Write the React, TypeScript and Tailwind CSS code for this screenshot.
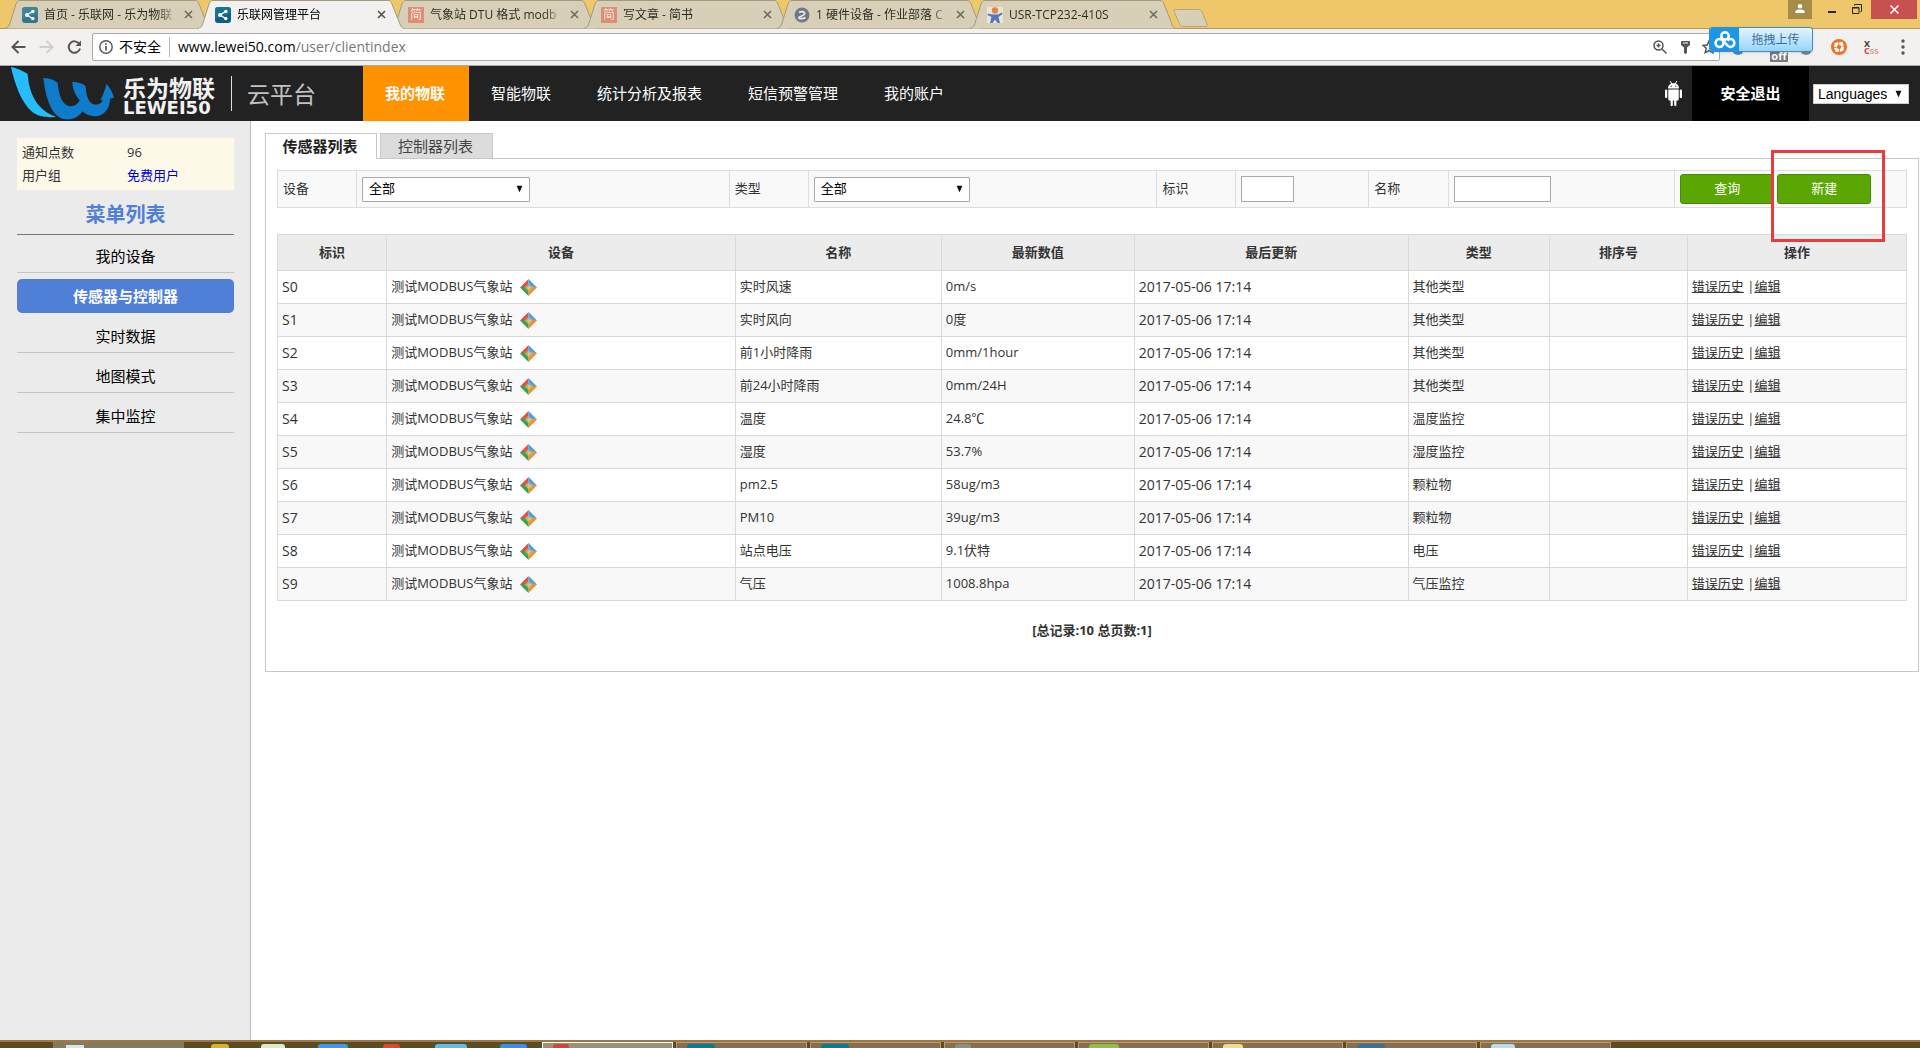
import React from 'react';

interface BrowserTab {
  title: string;
  icon: 'lewei' | 'jian' | 'zuoye' | 'usr';
  active?: boolean;
}

interface Sensor {
  id: string;
  name: string;
  value: string;
  type: string;
}

const browserTabs: BrowserTab[] = [
  { title: '首页 - 乐联网 - 乐为物联', icon: 'lewei' },
  { title: '乐联网管理平台', icon: 'lewei', active: true },
  { title: '气象站 DTU 格式 modb', icon: 'jian' },
  { title: '写文章 - 简书', icon: 'jian' },
  { title: '1 硬件设备 - 作业部落 C', icon: 'zuoye' },
  { title: 'USR-TCP232-410S', icon: 'usr' },
];

const navItems = ['我的物联', '智能物联', '统计分析及报表', '短信预警管理', '我的账户'];

const menuItems = ['我的设备', '传感器与控制器', '实时数据', '地图模式', '集中监控'];

const columns = [
  { label: '标识', width: '6.7%' },
  { label: '设备', width: '21.4%' },
  { label: '名称', width: '12.65%' },
  { label: '最新数值', width: '11.85%' },
  { label: '最后更新', width: '16.8%' },
  { label: '类型', width: '8.7%' },
  { label: '排序号', width: '8.45%' },
  { label: '操作', width: '13.45%' },
];

const sensors: Sensor[] = [
  { id: 'S0', name: '实时风速', value: '0m/s', type: '其他类型' },
  { id: 'S1', name: '实时风向', value: '0度', type: '其他类型' },
  { id: 'S2', name: '前1小时降雨', value: '0mm/1hour', type: '其他类型' },
  { id: 'S3', name: '前24小时降雨', value: '0mm/24H', type: '其他类型' },
  { id: 'S4', name: '温度', value: '24.8℃', type: '温度监控' },
  { id: 'S5', name: '湿度', value: '53.7%', type: '湿度监控' },
  { id: 'S6', name: 'pm2.5', value: '58ug/m3', type: '颗粒物' },
  { id: 'S7', name: 'PM10', value: '39ug/m3', type: '颗粒物' },
  { id: 'S8', name: '站点电压', value: '9.1伏特', type: '电压' },
  { id: 'S9', name: '气压', value: '1008.8hpa', type: '气压监控' },
];

const TabIcon: React.FC<{ icon: BrowserTab['icon'] }> = ({ icon }) => {
  if (icon === 'jian') {
    return (
      <span className="flex size-4 shrink-0 items-center justify-center bg-[#e07f66] text-xs text-[#f8e6dc]">简</span>
    );
  }
  if (icon === 'zuoye') {
    return (
      <svg viewBox="0 0 16 16" className="size-4 shrink-0">
        <circle cx="8" cy="8" r="7.5" fill="#56627f" />
        <path d="M5 5.500C7 4 11.500 4.500 10.500 7S5.500 9 5 10.500 9 12 11.500 10.500" fill="none" stroke="#f1efe8" strokeWidth="1.800" />
      </svg>
    );
  }
  if (icon === 'usr') {
    return (
      <svg viewBox="0 0 16 16" className="size-4 shrink-0">
        <rect width="16" height="16" fill="#f3ead8" />
        <circle cx="8" cy="3.500" r="3.200" fill="#e8742c" />
        <path d="M1 6.500 5 7.500h6l4-2 .5 1.500-4 3 1.500 6h-2.500L8 12.500 5.500 16H3l1.500-6L.5 8z" fill="#2f62c4" />
      </svg>
    );
  }
  return (
    <svg viewBox="0 0 16 16" className="size-4 shrink-0">
      <rect width="16" height="16" rx="3" fill="#0f5e86" />
      <path d="M3 0h10a3 3 0 0 1 3 3v3L0 12V3a3 3 0 0 1 3-3z" fill="#1c8296" opacity=".6" />
      <path d="M10.500 4.500 5 8l5.500 3.500" fill="none" stroke="#fff" strokeWidth="1.300" />
      <circle cx="5" cy="8" r="2" fill="#fff" />
      <circle cx="10.800" cy="4.500" r="1.700" fill="#fff" />
      <circle cx="10.800" cy="11.500" r="1.700" fill="#fff" />
    </svg>
  );
};

const TabStrip = () => (
  <div className="flex h-[29px] items-start justify-between border-b border-[#b09660] bg-[#eec76a]">
    <div className="flex pl-[5px]">
      {browserTabs.map((tab) => (
        <div
          key={tab.title}
          className={`relative -mr-[13px] flex h-[29px] w-[206px] items-center pr-[17px] pl-[17px] ${tab.active ? 'z-10' : ''}`}
        >
          <svg viewBox="0 0 206 29" preserveAspectRatio="none" className="absolute inset-0 h-full w-full">
            <path
              d="M0 28.500C3 28 4 26 5 23L11 4C12 1.500 13 .5 15 .5H190C192 .5 193 1.500 194 4L202 24C203 27 204 28 206 28.500"
              fill={tab.active ? '#f2f1f0' : '#d8cfb8'}
              stroke="#a4997c"
            />
            {tab.active && <path d="M1 28.500H205" stroke="#f2f1f0" />}
          </svg>
          <div className={`relative flex flex-1 items-center gap-[6px] ${tab.active ? '' : 'opacity-80'}`}>
            <TabIcon icon={tab.icon} />
            <a
              href="#tab"
              className="w-[134px] overflow-hidden text-xs whitespace-nowrap text-black [mask-image:linear-gradient(to_right,black_85%,transparent)]"
            >
              {tab.title}
            </a>
            <button aria-label="关闭标签页" className="shrink-0 text-[#55514a]">
              <svg viewBox="0 0 9 9" className="size-[9px]">
                <path d="M1 1 8 8M8 1 1 8" stroke="currentColor" strokeWidth="1.600" />
              </svg>
            </button>
          </div>
        </div>
      ))}
      <button aria-label="新标签页" className="mt-[7px] ml-[10px]">
        <svg viewBox="0 0 36 18" className="h-[18px] w-[36px]">
          <path d="M2 .5H26C27 .5 28 1 28.500 2L34 15C34.500 16.500 34 17.500 33 17.500H10C8 17.500 7.500 17 7 16L1 2C.8 1 1 .5 2 .5z" fill="#d8cfb8" stroke="#b3a57c" />
        </svg>
      </button>
    </div>
    <div className="flex items-start pr-[3px]">
      <button aria-label="用户" className="flex h-[19px] w-6 justify-center bg-[#a68c48] pt-1">
        <svg viewBox="0 0 10 9" className="h-[9px] w-[10px]" fill="#fff">
          <circle cx="5" cy="2.200" r="2.200" />
          <path d="M.5 9V7.200C.5 5 9.500 5 9.500 7.200V9z" />
        </svg>
      </button>
      <button aria-label="最小化" className="ml-4 pt-[11px]">
        <span className="block h-[2px] w-2 bg-[#2b2417]" />
      </button>
      <button aria-label="还原" className="ml-4 pt-1">
        <svg viewBox="0 0 10 10" className="size-[10px]" fill="none" stroke="#2b2417">
          <path d="M.5 3.500h6.500v6H.500zM.5 4h6.500M2.500 1.500V.5h7v7H8.500" />
        </svg>
      </button>
      <button aria-label="关闭" className="ml-[9px] flex h-[19px] w-[46px] items-center justify-center bg-[#c75050]">
        <svg viewBox="0 0 9 9" className="size-[9px]">
          <path d="M.5.5 8.500 8.500M8.500.5.5 8.500" stroke="#fff" strokeWidth="1.500" />
        </svg>
      </button>
    </div>
  </div>
);

const UploadWidget = () => (
  <button className="absolute top-[-2px] right-[107px] flex h-[25px] w-[104px] items-center overflow-hidden rounded-[3px] border border-[#3c8fc0] bg-gradient-to-b from-[#e3f5fe] to-[#97d5fa] shadow">
    <span className="flex h-full w-[29px] items-center justify-center bg-[#1c97e8]">
      <svg viewBox="0 0 22 18" className="h-[18px] w-[22px]" fill="none" stroke="#fff" strokeWidth="2.500">
        <circle cx="11" cy="5" r="3.700" />
        <circle cx="5.500" cy="12" r="3.900" />
        <path d="M9 9.500 13.500 14.500A3.900 3.900 0 1 0 13.500 9.500" />
      </svg>
    </span>
    <span className="flex-1 text-xs text-[#3d6f9c]">拖拽上传</span>
  </button>
);

const Toolbar = () => (
  <div className="relative flex h-[37px] items-center border-b border-[#a9a9a9] bg-[#f2f1f0] pr-[15px] pl-[11px]">
    <div className="flex items-center gap-[13px] text-[#555]">
      <button aria-label="后退">
        <svg viewBox="0 0 15 14" className="h-[14px] w-[15px]" fill="none" stroke="currentColor" strokeWidth="2">
          <path d="M14.500 7H2M7.500 1 1.500 7l6 6" />
        </svg>
      </button>
      <button aria-label="前进" className="text-[#cfcfcf]">
        <svg viewBox="0 0 15 14" className="h-[14px] w-[15px]" fill="none" stroke="currentColor" strokeWidth="2">
          <path d="M.5 7H13M7.500 1l6 6-6 6" />
        </svg>
      </button>
      <button aria-label="重新加载">
        <svg viewBox="0 0 15 14" className="h-[14px] w-[15px]" fill="none" stroke="currentColor" strokeWidth="2">
          <path d="M12.300 4A5.700 5.700 0 1 0 13 8.500" />
          <path d="M14 .5V6H8.500z" fill="currentColor" stroke="none" />
        </svg>
      </button>
    </div>
    <div className="ml-[10px] flex h-[28px] flex-1 items-center rounded-[2px] border border-[#a9a9a9] bg-white pr-[3px] pl-[6px] text-sm">
      <svg viewBox="0 0 14 14" className="size-[14px] shrink-0" fill="none" stroke="#555" strokeWidth="1.400">
        <circle cx="7" cy="7" r="6.200" />
        <path d="M7 6v4.500M7 3.200v1.600" strokeWidth="1.700" />
      </svg>
      <span className="ml-[6px] border-r border-[#b5b5b5] pr-2 leading-5">不安全</span>
      <div className="ml-2 flex-1 text-[#777]">
        <a href="#site" className="text-black">www.lewei50.com</a>/user/clientindex
      </div>
      <svg viewBox="0 0 14 14" className="size-[14px]" fill="none" stroke="#555" strokeWidth="1.500">
        <circle cx="5.500" cy="5.500" r="4.500" />
        <path d="M9 9l4.500 4.500M3.500 5.500h4M5.500 3.500v4" />
      </svg>
      <svg viewBox="0 0 9 13" className="mr-3 ml-[14px] h-[13px] w-[9px]" fill="#555">
        <path d="M0 1a1 1 0 0 1 1-1h7a1 1 0 0 1 1 1v3L6 6.500V12L4.500 13 3 12V6.500L0 4zM2 1.500v1h5v-1z" />
      </svg>
      <svg viewBox="0 0 14 14" className="size-[14px]" fill="none" stroke="#555" strokeWidth="1.500">
        <path d="M7 1l1.800 4 4.200.4-3.200 2.900 1 4.400L7 10.500 3.200 12.700l1-4.400L1 5.400 5.200 5z" />
      </svg>
    </div>
    <div className="ml-3 flex items-center">
      <span className="mt-1 size-3 rounded-full bg-[#3f8fc8]" />
      <span className="mt-[15px] ml-[26px] flex h-[14px] w-[18px] items-end justify-center overflow-hidden bg-[#7a7a7a] text-[11px] leading-3 font-bold text-white">
        off
      </span>
      <span className="mt-1 ml-3 size-3 rounded-full bg-[#7c8790]" />
      <svg viewBox="0 0 16 16" className="ml-[19px] size-4">
        <circle cx="8" cy="8" r="8" fill="#f0702a" />
        <circle cx="8" cy="8" r="3.600" fill="none" stroke="#fff" strokeWidth="2.800" strokeDasharray="4.600 1" />
        <path d="M3.500 4.500 6 6.500M11.500 3 9.500 6M12.500 11.500 10 9.500M5 13 6.500 10" stroke="#fff" strokeWidth="1.400" />
      </svg>
      <span className="ml-[17px] flex h-[14px] w-[13px] flex-col text-[9px] leading-[7px] font-bold">
        <span className="text-[#333]">X</span>
        <span className="text-[#d8464c]">C<span className="text-[#e89a9a]">ss</span></span>
      </span>
      <button aria-label="菜单" className="ml-[24px]">
        <svg viewBox="0 0 4 16" className="h-4 w-1" fill="#555">
          <circle cx="2" cy="2" r="1.700" />
          <circle cx="2" cy="8" r="1.700" />
          <circle cx="2" cy="14" r="1.700" />
        </svg>
      </button>
    </div>
    <UploadWidget />
  </div>
);

const Logo = () => (
  <a href="#home" className="flex h-full w-[363px] shrink-0 items-center pl-[11px]">
    <svg viewBox="33 12 309 162" className="h-[54px] w-[103px]">
      <path d="M33 12C42 12 78 28 83 33C86 80 104 140 168 161C150 165 118 163 98 148C62 118 44 60 33 12z" fill="#25bdfb" />
      <path d="M130 45C150 46 165 52 173 60C176 95 186 124 206 129C222 132 234 124 239 112C227 98 218 80 217 57C235 57 250 62 257 70C258 95 264 118 280 124C296 127 306 120 308 111L301 112C311 92 317 76 319 62C330 74 338 88 342 104L330 107C330 137 312 158 286 160C268 160 256 153 248 145C236 162 218 171 198 169C156 166 138 110 130 45z" fill="#0f7ccb" />
    </svg>
    <span className="ml-[9px] flex w-[98px] flex-col pt-[3px] text-[#f2f2f2]">
      <span className="text-[23px] leading-[24px] font-bold">乐为物联</span>
      <span className="font-['DejaVu_Sans'] text-lg leading-[15px] font-bold">LEWEI50</span>
    </span>
    <span className="ml-[10px] h-[35px] w-px bg-[#ddd]" />
    <span className="ml-[15px] text-[23px] leading-[24px] text-[#c2c2c2]">云平台</span>
  </a>
);

const SiteHeader = () => (
  <header className="flex h-[55px] items-center bg-[#222] text-[15px] text-white">
    <Logo />
    <nav className="flex h-full flex-1">
      {navItems.map((item, i) => (
        <a
          key={item}
          href="#nav"
          className={`flex h-full items-center pr-6 pl-[22px] ${i === 0 ? 'bg-[#ff9200] font-bold' : ''}`}
        >
          {item}
        </a>
      ))}
    </nav>
    <svg viewBox="0 0 52 78" className="mr-[10px] h-[26px] w-[17px]" fill="#fff">
      <path d="M9 22C9 14 14 9 19 7L14 0l2-1 6 7h8l6-7 2 1-5 7c5 2 10 7 10 15z" />
      <path d="M10 25h32v30a4 4 0 0 1-4 4h-3v14a3 3 0 0 1-7 0V59h-4v14a3 3 0 0 1-7 0V59h-3a4 4 0 0 1-4-4z" />
      <rect x="0" y="25" width="7" height="27" rx="3.500" />
      <rect x="45" y="25" width="7" height="27" rx="3.500" />
      <circle cx="19" cy="15" r="2" fill="#222" />
      <circle cx="33" cy="15" r="2" fill="#222" />
    </svg>
    <button className="h-full w-[117px] bg-black font-bold">安全退出</button>
    <div className="relative mr-[11px] ml-1">
      <select
        aria-label="Languages"
        className="block h-5 w-[96px] appearance-none border border-[#ccc] bg-white pl-1 font-['Liberation_Sans'] text-sm leading-4 text-black"
      >
        <option>Languages</option>
      </select>
      <Arrow />
    </div>
  </header>
);

const Arrow = () => (
  <svg viewBox="0 0 7 7" className="pointer-events-none absolute top-1/2 right-[7px] size-[7px] -translate-y-1/2">
    <path d="M.5 0h6L3.500 7z" fill="#111" />
  </svg>
);

const Sidebar = () => (
  <aside className="w-[251px] shrink-0 border-r border-[#bbb] bg-[#ebebeb] pt-[17px] pr-4 pl-[17px]">
    <dl className="grid grid-cols-[105px_1fr] bg-[#fdf9e8] px-[5px] py-[3px] text-[13px] leading-[23px] text-[#333]">
      <dt>通知点数</dt>
      <dd>96</dd>
      <dt>用户组</dt>
      <dd>
        <a href="#group" className="text-[#00d]">免费用户</a>
      </dd>
    </dl>
    <h2 className="border-b border-[#777] pt-[10px] pb-1 text-center text-xl leading-[30px] font-bold text-[#507fd8]">菜单列表</h2>
    <ul className="mt-1 flex flex-col gap-[6px] text-center text-[15px]">
      {menuItems.map((item, i) => (
        <li key={item}>
          <a
            href="#menu"
            className={
              i === 1
                ? 'block h-[34px] rounded-[5px] bg-[#507fd8] leading-[34px] font-bold text-white'
                : 'block h-[34px] border-b border-[#c4c4c4] leading-[34px] text-black'
            }
          >
            {item}
          </a>
        </li>
      ))}
    </ul>
  </aside>
);

const labelCell = 'flex items-center border-r border-[#ddd] pl-[5px]';
const greenButton = 'h-[30px] w-[94px] rounded-[3px] border border-[#4a8a00] bg-[#5aa602] text-white';

const FilterBar = () => (
  <form className="grid h-[38px] grid-cols-[79fr_373fr_79fr_349fr_79fr_133fr_80fr_226fr_231fr] border border-[#ddd] bg-[#f9f9f9]">
    <label htmlFor="device" className={labelCell}>设备</label>
    <div className={labelCell}>
      <div className="relative w-[168px]">
        <select id="device" className="block h-[25px] w-full appearance-none rounded-[1px] border border-[#a9a9a9] bg-white pl-[6px] text-black">
          <option>全部</option>
        </select>
        <Arrow />
      </div>
    </div>
    <label htmlFor="type" className={labelCell}>类型</label>
    <div className={labelCell}>
      <div className="relative w-[156px]">
        <select id="type" className="block h-[25px] w-full appearance-none rounded-[1px] border border-[#a9a9a9] bg-white pl-[6px] text-black">
          <option>全部</option>
        </select>
        <Arrow />
      </div>
    </div>
    <label htmlFor="mark" className={labelCell}>标识</label>
    <div className={labelCell}>
      <input id="mark" type="text" className="h-[26px] w-[53px] border border-[#a9a9a9] bg-white" />
    </div>
    <label htmlFor="name" className={labelCell}>名称</label>
    <div className={labelCell}>
      <input id="name" type="text" className="h-[26px] w-[97px] border border-[#a9a9a9] bg-white" />
    </div>
    <div className="flex items-center gap-[3px] pl-[5px]">
      <button type="button" className={greenButton}>查询</button>
      <div className="relative">
        <button type="button" className={greenButton}>新建</button>
        {/* marks the button to click */}
        <div className="pointer-events-none absolute -top-6 -right-[14px] -bottom-[38px] -left-[6px] border-3 border-[#e83c3e]" />
      </div>
    </div>
  </form>
);

const Diamond = () => (
  <svg viewBox="0 0 17 17" className="mt-px ml-2 size-[17px]">
    <path d="M8.500 0 0 8.500l5 1 3.500-3z" fill="#e2504a" />
    <path d="M8.500 0 17 8.500l-5 1-3.500-3z" fill="#43a5dc" />
    <path d="M17 8.500 8.500 17V11l3.500-4z" fill="#e8943a" />
    <path d="M0 8.500 8.500 17V11L5 7z" fill="#3d9f4c" />
    <path d="M8.500 4.500 12.500 8.500H8.500z" fill="#7fc4d8" />
    <path d="M4.500 8.500H8.500V12.500z" fill="#8cc46a" />
    <path d="M8.500 8.500H12.500L8.500 12.500z" fill="#f3b64f" />
    <path d="M8.500 4.500V8.500H4.500z" fill="#ee8a72" />
  </svg>
);

const SensorTable = () => (
  <table className="mt-[26px] w-full table-fixed border-collapse">
    <colgroup>
      {columns.map((c) => (
        <col key={c.label} style={{ width: c.width }} />
      ))}
    </colgroup>
    <thead>
      <tr className="h-9 bg-[#ececec]">
        {columns.map((c) => (
          <th key={c.label} className="border border-[#d9d9d9] font-bold">{c.label}</th>
        ))}
      </tr>
    </thead>
    <tbody className="[&_td]:border [&_td]:border-[#d9d9d9] [&_td]:pl-1">
      {sensors.map((s) => (
        <tr key={s.id} className="h-[33px] even:bg-[#f8f8f8]">
          <td className="text-sm">{s.id}</td>
          <td>
            <div className="flex items-center">
              测试MODBUS气象站
              <Diamond />
            </div>
          </td>
          <td>{s.name}</td>
          <td>{s.value}</td>
          <td className="text-sm">2017-05-06 17:14</td>
          <td>{s.type}</td>
          <td />
          <td>
            <a href="#history" className="underline">错误历史</a> |<a href="#edit" className="underline">编辑</a>
          </td>
        </tr>
      ))}
    </tbody>
  </table>
);

const Main = () => (
  <main className="min-w-0 flex-1 pt-3 pr-px pl-[14px]">
    <div className="relative z-10 -mb-px flex items-end gap-[3px] text-[15px] leading-[22px]">
      <button className="h-[26px] w-[112px] border border-b-0 border-[#c8c8c8] bg-white pr-[2px] pb-[2px] font-bold text-[#222]">传感器列表</button>
      <button className="h-[26px] w-[113px] border border-[#c8c8c8] bg-[#dcdcdc] pr-[2px] text-[#444]">控制器列表</button>
    </div>
    <section className="border border-[#c8c8c8] px-[11px] pt-[11px] text-[13px] text-[#333]">
      <FilterBar />
      <SensorTable />
      <p className="pt-[19px] pb-[31px] text-center leading-[20px] font-bold">[总记录:10 总页数:1]</p>
    </section>
  </main>
);

const pinned = [
  { key: 'ie', cls: 'ml-[27px] w-[18px] bg-[#d8b030]' },
  { key: 'wechat', cls: 'ml-8 w-6 bg-[#dcecc8]' },
  { key: 'cloud', cls: 'ml-[33px] w-[30px] bg-[#3f9be8]' },
  { key: 'chrome', cls: 'ml-[35px] w-[17px] bg-[#d84a30]' },
  { key: 'folder', cls: 'ml-[35px] w-8 bg-[#62bdee]' },
  { key: 'mail', cls: 'ml-[33px] w-[27px] bg-[#3c8fe8]' },
];

const tasks = [
  { key: 'browser', cls: 'w-4 bg-[#c94a3c]' },
  { key: 'arduino', cls: 'w-7 bg-[#0a7a96]' },
  { key: 'arduino2', cls: 'w-7 bg-[#0a7a96]' },
  { key: 'tool', cls: 'w-4 bg-[#8d9088]' },
  { key: 'android', cls: 'w-[30px] bg-[#8cc04a]' },
  { key: 'explorer', cls: 'w-5 bg-[#ecdc9c]' },
  { key: 'contacts', cls: 'w-7 bg-[#3c6f9c]' },
  { key: 'notes', cls: 'w-6 bg-[#b8dcf0]' },
];

const Taskbar = () => (
  <footer className="flex h-2 items-end overflow-hidden border-t-2 border-[#a07840] bg-[#5c4c26]">
    <div className="ml-[53px] flex h-[6px] w-[131px] items-end bg-[#857a5c] pl-[13px]">
      <span className="h-[3px] w-[18px] bg-[#dde3ea]" />
    </div>
    {pinned.map((p) => (
      <span key={p.key} className={`h-1 rounded-t-[3px] ${p.cls}`} />
    ))}
    <div className="ml-[15px] flex flex-1 gap-[3px]">
      {tasks.map((t, i) => (
        <div
          key={t.key}
          className={`flex h-[6px] w-[131px] items-end border-x border-t pl-[10px] ${i === 0 ? 'border-white bg-[#9d8f78]' : 'border-[#b89c70] bg-[#84704e]'}`}
        >
          <span className={`h-1 rounded-t-[3px] ${t.cls}`} />
        </div>
      ))}
    </div>
  </footer>
);

const App = () => (
  <div className="flex min-h-screen flex-col bg-white font-['Open_Sans','Noto_Sans_CJK_SC',sans-serif]">
    <TabStrip />
    <Toolbar />
    <SiteHeader />
    <div className="flex flex-1">
      <Sidebar />
      <Main />
    </div>
    <Taskbar />
  </div>
);

export default App;
